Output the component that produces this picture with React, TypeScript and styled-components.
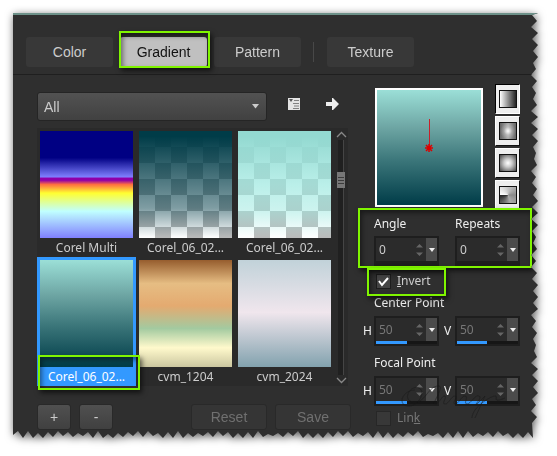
import React, { useId } from "react";
import styled, { createGlobalStyle, css } from "styled-components";

const ui = `"Noto Sans", "Open Sans", sans-serif`;
const arial = `"Liberation Sans", Arial, sans-serif`;

const GlobalStyle = createGlobalStyle`
  *, *::before, *::after { box-sizing: border-box; }
  body { margin: 0; background: #fff; font-family: ${ui}; }
  button, input, select { font: inherit; margin: 0; }
`;

/* Torn-paper outline: depth of every tooth along the right and bottom sides. */
const peaks = [0, 1, 2, 0, 1, 0, 2];
const valleys = [6, 5, 7, 4, 6, 7, 5, 4];
const depth = (i: number) => (i % 2 ? peaks[i % 7] : valleys[i % 8 === 0 ? (i / 8) % 8 : i % 8]);
const rightEdge = Array.from({ length: 69 }, (_, i) => `calc(100% - ${depth(i)}px) ${2 + i * 6}px`);
const bottomEdge = Array.from({ length: 104 }, (_, i) => {
  const x = 5 + i * 5;
  return `calc(100% - ${x}px) calc(100% - ${depth(i + 3)}px)`;
});
const tornOutline = ["0 0", "100% 0", ...rightEdge, ...bottomEdge, "0 calc(100% - 3px)"].join(", ");

const Sheet = styled.main`
  padding: 13px 19px 19px 13px;
`;
const Shadow = styled.div`
  filter: drop-shadow(1px 2px 4px rgba(0, 0, 0, 0.65));
`;
const Panel = styled.div`
  background: #2f2f2f;
  clip-path: polygon(${tornOutline});
  border-top: 2px solid #6d9189;
  color: #ccc;
`;

const callout = css`
  content: "";
  position: absolute;
  z-index: 2;
  border: 2px solid #80f500;
  box-shadow: 2px 3px 5px rgba(0, 0, 0, 0.6), inset 2px 3px 5px rgba(0, 0, 0, 0.45);
  pointer-events: none;
`;

const Tabs = styled.nav`
  display: flex;
  align-items: center;
  gap: 7px;
  padding: 22px 13px 7px;
  border-bottom: 1px solid #1f1f1f;
`;
const Tab = styled.button<{ $active?: boolean }>`
  position: relative;
  width: 87px;
  height: 30px;
  padding: 0;
  border: 0;
  border-radius: 3px;
  background: ${(p) => (p.$active ? "#c0c0c0" : "#383838")};
  color: ${(p) => (p.$active ? "#111" : "#ccc")};
  font: 14px/30px ${arial};
  ${(p) => p.$active && css`&::after { ${callout} inset: -6px -3px -1px -1px; }`}
`;
const TabDivider = styled.span`
  width: 1px;
  height: 20px;
  margin: 0 6px 0 5px;
  background: #484848;
`;

const Content = styled.div`
  display: flex;
  justify-content: space-between;
  padding: 9px 18px 8px 24px;
`;
const Library = styled.section`
  width: 314px;
  padding-top: 8px;
`;
const LibraryBar = styled.div`
  display: flex;
  align-items: center;
  margin-bottom: 7px;
`;
const SelectBox = styled.div`
  position: relative;
  flex: 0 0 230px;
  svg { position: absolute; right: 8px; top: 12px; pointer-events: none; }
`;
const Category = styled.select`
  appearance: none;
  display: block;
  width: 100%;
  height: 29px;
  padding: 0 6px;
  border: 1px solid #252525;
  border-radius: 3px;
  background: linear-gradient(#525252, #414141);
  color: #ccc;
  font: 14px/20px ${arial};
`;
const IconButton = styled.button`
  display: flex;
  align-items: center;
  justify-content: center;
  width: 40px;
  height: 24px;
  margin-bottom: 5px;
  padding: 0;
  border: 0;
  background: none;
  &:first-of-type { margin-left: 8px; }
`;

const Gallery = styled.div`
  display: flex;
  width: 311px;
  background: #2a2a2a;
`;
const Grid = styled.div`
  display: grid;
  grid-template-columns: repeat(3, 99px);
`;
const Item = styled.button<{ $selected?: boolean }>`
  position: relative;
  height: 129px;
  padding: 3px 3px 0;
  border: 0;
  display: flex;
  flex-direction: column;
  align-items: stretch;
  justify-content: flex-start;
  background: ${(p) => (p.$selected ? "#3399ff" : "transparent")};
  color: ${(p) => (p.$selected ? "#fff" : "#ccc")};
  font: 12px/19px ${ui};
  text-align: center;
  ${(p) => p.$selected && css`&::after { ${callout} inset: 98px -4px -4px 1px; }`}
`;
const Swatch = styled.span<{ $fill: string }>`
  display: block;
  flex: none;
  height: 107px;
  background: ${(p) => p.$fill};
`;
const ScrollRail = styled.div`
  display: flex;
  flex-direction: column;
  align-items: center;
  width: 14px;
  padding: 3px 0 2px;
`;
const Track = styled.div`
  flex: 1;
  width: 6px;
  margin: 2px 0;
  display: flex;
  justify-content: center;
  background: #202020;
  border-right: 1px solid #454545;
`;
const Thumb = styled.div`
  flex: none;
  width: 8px;
  height: 16px;
  margin-top: 32px;
  border: solid #777;
  border-width: 3px 1px;
  background: repeating-linear-gradient(#777 0 2px, #3c3c3c 2px 3px);
`;
const Actions = styled.div`
  display: flex;
  gap: 8px;
  margin-top: 18px;
`;
const ActionButton = styled.button<{ $wide?: boolean; $push?: boolean }>`
  width: ${(p) => (p.$wide ? 76 : 34)}px;
  height: 26px;
  padding: 0;
  border: 1px solid #292929;
  border-radius: 3px;
  background: ${(p) => (p.$wide ? "#353535" : "linear-gradient(#505050, #404040)")};
  color: ${(p) => (p.$wide ? "#707070" : "#ccc")};
  font: 14px/20px ${arial};
  ${(p) => p.$push && "margin-left: auto;"}
`;

const Settings = styled.section`
  width: 157px;
`;
const PreviewRow = styled.div`
  display: flex;
  justify-content: space-between;
  height: 124px;
  padding-left: 12px;
`;
const Preview = styled.div`
  width: 108px;
  height: 119px;
  margin-top: 4px;
  border: 2px solid #fff;
  background: linear-gradient(#9bdfd7, #6da5a3 33%, #3a7579 62%, #003c48);
`;
const Styles = styled.div`
  display: flex;
  flex-direction: column;
  gap: 2px;
  height: 124px;
  overflow: hidden;
`;
const StyleButton = styled.button<{ $pressed?: boolean }>`
  flex: none;
  width: 25px;
  height: 30px;
  padding: 0;
  display: flex;
  align-items: center;
  justify-content: center;
  background: #eee;
  border: 1px solid;
  border-color: ${(p) => (p.$pressed ? "#000 #fff #fff #000" : "#fff #111 #111 #fff")};
`;
const StyleFill = styled.span<{ $fill: string }>`
  width: 18px;
  height: 18px;
  border: 1px solid #111;
  background: ${(p) => p.$fill};
`;

const Pair = styled.div<{ $framed?: boolean }>`
  position: relative;
  display: grid;
  grid-template-columns: 65px 65px;
  column-gap: 16px;
  padding-left: 11px;
  ${(p) => p.$framed && css`
    padding-top: 4px;
    padding-bottom: 2px;
    &::after { ${callout} inset: 0 -12px 0 -5px; }
  `}
`;
const Field = styled.label<{ $side?: boolean }>`
  position: relative;
  display: block;
  color: #eee;
  font: 12px/24px ${ui};
  ${(p) => p.$side && css`
    & > span:first-child { position: absolute; left: -11px; top: 3px; }
  `}
`;
const Spin = styled.span`
  display: flex;
  flex-direction: column;
  height: 30px;
  border: 2px solid #1e1e1e;
  background: #2b2b2b;
`;
const SpinRow = styled.span`
  display: flex;
  flex: 1;
  min-height: 0;
  align-items: center;
`;
const SpinInput = styled.input`
  flex: 1;
  min-width: 0;
  height: 22px;
  padding: 0 3px;
  border: 0;
  background: none;
  color: #ccc;
  font: 12px/20px ${ui};
  &:disabled { color: #777; }
`;
const DropButton = styled.button`
  display: flex;
  align-items: center;
  justify-content: center;
  width: 11px;
  height: 100%;
  margin-left: 3px;
  padding: 0;
  border: 0;
  background: #4b4b4b;
`;
const Meter = styled.span<{ $on?: boolean }>`
  height: 3px;
  background: ${(p) => (p.$on ? "linear-gradient(90deg, #3399ff 50%, #161616 50%)" : "#1e1e1e")};
`;
const GroupTitle = styled.h2<{ $tall?: boolean }>`
  margin: 0;
  padding: ${(p) => (p.$tall ? "8px 0 4px 11px" : "0 0 4px 11px")};
  color: #eee;
  font: 12px/18px ${ui};
`;
const CheckRow = styled.label<{ $framed?: boolean; $muted?: boolean }>`
  position: relative;
  display: flex;
  align-items: center;
  gap: 6px;
  width: 84px;
  height: ${(p) => (p.$framed ? 26 : 24)}px;
  padding-left: 13px;
  color: ${(p) => (p.$muted ? "#777" : "#ccc")};
  font: 12px/18px ${ui};
  ${(p) => p.$framed && css`&::after { ${callout} inset: 0 1px -2px 4px; }`}
`;
const Check = styled.input`
  appearance: none;
  width: 15px;
  height: 15px;
  border: 1px solid #1d1d1d;
  background: #444;
  &:disabled { background: #383838; border-color: #272727; }
`;
const CheckBoxWrap = styled.span`
  position: relative;
  display: flex;
  svg { position: absolute; inset: 2px; pointer-events: none; }
`;
const Watermark = styled.svg`
  position: absolute;
  left: 36px;
  top: 6px;
  z-index: 1;
  pointer-events: none;
`;

const checker = (a: string, b: string) =>
  `linear-gradient(${a}, ${b}), repeating-conic-gradient(#bbb 0 25%, #fff 0 50%) 0 0 / 32px 32px`;

const gradients = [
  {
    name: "Corel Multi",
    fill: "linear-gradient(#000083 0 25%, #8080ff 43%, #9000a8 44% 46%, #ff7040 50%, #ffff30 58%, #c0ffff 75%, #8080ff)",
  },
  { name: "Corel_06_02...", fill: checker("#003c48 5%", "#003c4880 72%, #003c4800") },
  { name: "Corel_06_02...", fill: checker("#93d9d1 5%, #9be8dfb0 50%", "#9be8df80 75%, #9be8df00") },
  { name: "Corel_06_02...", fill: "linear-gradient(#9bdfd7, #6da5a3 33%, #3a7579 62%, #003c48)", selected: true },
  {
    name: "cvm_1204",
    fill: "linear-gradient(#965d2e, #e6bd83 22%, #e4aa70 43%, #a3caa0 64%, #fff9cc 82%, #cbc7a0)",
  },
  { name: "cvm_2024", fill: "linear-gradient(#c1d2d9, #f0e6ed 49%, #82a2ae)" },
];

const styles = [
  { name: "Linear", fill: "linear-gradient(90deg, #fff, #222)" },
  {
    name: "Rectangular",
    fill: "radial-gradient(closest-side, #fff, #ffffff40 50%, transparent), linear-gradient(90deg, #666, #aaa, #666)",
  },
  { name: "Sunburst", fill: "radial-gradient(#fff, #ccc 35%, #444)" },
  { name: "Radial", fill: "conic-gradient(from 270deg, #fff, #bbb 30%, #888 50%, #aaa 70%, #222)" },
];

const Down = ({ size = 7, color = "#ccc" }) => (
  <svg width={size} height={size / 2 + 1} viewBox="0 0 8 4" preserveAspectRatio="none" aria-hidden>
    <path d="M0 0h8L4 4z" fill={color} />
  </svg>
);
const Chevron = ({ up }: { up?: boolean }) => (
  <svg width="11" height="7" viewBox="0 0 11 7" fill="none" stroke="#888" strokeWidth="1.3" aria-hidden>
    <path d={up ? "M1 6l4.500-4.500L10 6" : "M1 1l4.500 4.500L10 1"} />
  </svg>
);

function Spinner({ label, value, disabled, side }: { label: string; value: number; disabled?: boolean; side?: boolean }) {
  const id = useId();
  return (
    <Field htmlFor={id} $side={side}>
      <span>{label}</span>
      <Spin>
        <SpinRow>
          <SpinInput id={id} defaultValue={value} disabled={disabled} />
          <svg width="7" height="12" viewBox="0 0 7 12" fill="#666" aria-hidden>
            <path d="M0 3.500L3.500 0 7 3.500zM0 8.500L3.500 12 7 8.500z" />
          </svg>
          <DropButton type="button" aria-label={`${label} slider`}>
            <Down size={6} color="#eee" />
          </DropButton>
        </SpinRow>
        <Meter $on={disabled} />
      </Spin>
    </Field>
  );
}

export default function App() {
  return (
    <>
      <GlobalStyle />
      <Sheet>
        <Shadow>
          <Panel>
            <Tabs>
              <Tab>Color</Tab>
              <Tab $active>Gradient</Tab>
              <Tab>Pattern</Tab>
              <TabDivider />
              <Tab>Texture</Tab>
            </Tabs>
            <Content>
              <Library>
                <LibraryBar>
                  <SelectBox>
                    <Category aria-label="Category" defaultValue="All">
                      <option>All</option>
                    </Category>
                    <Down />
                  </SelectBox>
                  <IconButton aria-label="Resource list">
                    <svg width="12" height="12" viewBox="0 0 12 12" aria-hidden>
                      <path d="M0 0h12v12H0z" fill="#e4e4e4" />
                      <path d="M1 1h4L3 4z" fill="#555" />
                      <path d="M6 2.500h5M5 5.500h6M6 8h5M5 10.500h6" stroke="#666" strokeWidth=".8" />
                    </svg>
                  </IconButton>
                  <IconButton aria-label="More options">
                    <svg width="13" height="12" viewBox="0 0 13 12" aria-hidden>
                      <path d="M0 4h6V0h1l6 6-6 6H6V8H0z" fill="#eee" />
                    </svg>
                  </IconButton>
                </LibraryBar>
                <Gallery>
                  <Grid>
                    {gradients.map((g, i) => (
                      <Item key={i} $selected={g.selected}>
                        <Swatch $fill={g.fill} />
                        {g.name}
                      </Item>
                    ))}
                  </Grid>
                  <ScrollRail>
                    <Chevron up />
                    <Track>
                      <Thumb />
                    </Track>
                    <Chevron />
                  </ScrollRail>
                </Gallery>
                <Actions>
                  <ActionButton>+</ActionButton>
                  <ActionButton>-</ActionButton>
                  <ActionButton $wide $push disabled>Reset</ActionButton>
                  <ActionButton $wide disabled>Save</ActionButton>
                </Actions>
              </Library>
              <Settings>
                <PreviewRow>
                  <Preview>
                    <svg width="104" height="115" viewBox="0 0 104 115" aria-hidden>
                      <path d="M52.500 29v29" stroke="#c8202a" />
                      <path d="M48 58h8M52 54v8M49 55l6 6M55 55l-6 6" stroke="#d00" strokeWidth="1.500" />
                    </svg>
                  </Preview>
                  <Styles>
                    {styles.map((s, i) => (
                      <StyleButton key={s.name} aria-label={s.name} $pressed={i === 0}>
                        <StyleFill $fill={s.fill} />
                      </StyleButton>
                    ))}
                  </Styles>
                </PreviewRow>
                <Pair $framed>
                  <Spinner label="Angle" value={0} />
                  <Spinner label="Repeats" value={0} />
                </Pair>
                <CheckRow $framed>
                  <CheckBoxWrap>
                    <Check type="checkbox" defaultChecked />
                    <svg width="11" height="11" viewBox="0 0 11 11" fill="none" stroke="#fff" strokeWidth="2" aria-hidden>
                      <path d="M1 5l3 4 6-7" />
                    </svg>
                  </CheckBoxWrap>
                  <span><u>I</u>nvert</span>
                </CheckRow>
                <GroupTitle>Center Point</GroupTitle>
                <Pair>
                  <Spinner label="H" value={50} disabled side />
                  <Spinner label="V" value={50} disabled side />
                </Pair>
                <GroupTitle $tall>Focal Point</GroupTitle>
                <Pair>
                  <Spinner label="H" value={50} disabled side />
                  <Spinner label="V" value={50} disabled side />
                  <Watermark width="112" height="36" viewBox="0 0 112 36" fill="none" stroke="#1a1a1a" strokeOpacity=".5" aria-hidden>
                    <path d="M16 8C4 8-2 22 8 24s20-14 12-18-18 12-6 14 14-14 24-16-6 18-2 18 8-10 10-8-4 8 0 8 6-8 10-8-4 8 0 8 6-8 10-8-2 8 2 8 8-10 12-8-6 10-2 8l8-8-10 22c-4 4-4-2 0-8s16-14 20-14-4 8 10 2" />
                  </Watermark>
                </Pair>
                <CheckRow $muted>
                  <CheckBoxWrap>
                    <Check type="checkbox" disabled />
                  </CheckBoxWrap>
                  <span>Lin<u>k</u></span>
                </CheckRow>
              </Settings>
            </Content>
          </Panel>
        </Shadow>
      </Sheet>
    </>
  );
}
